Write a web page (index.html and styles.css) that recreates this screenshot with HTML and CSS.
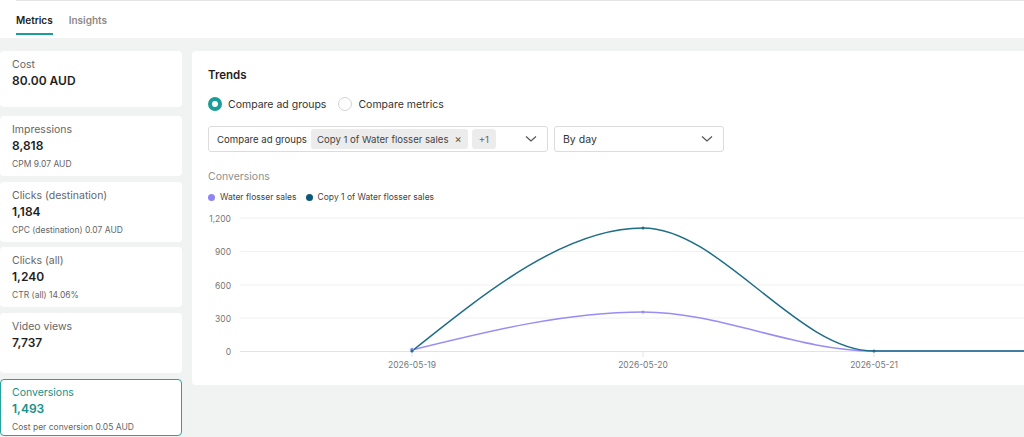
FILE: index.html
```html
<!DOCTYPE html>
<html>
<head>
<meta charset="utf-8">
<link rel="stylesheet" href="styles.css">
</head>
<body>
<header class="header">
  <div class="topline"></div>
  <nav class="tabs">
    <div class="tab active">Metrics</div>
    <div class="tab">Insights</div>
  </nav>
</header>
<main class="main">
  <aside class="cards">
    <div class="card"><div class="label">Cost</div><div class="value">80.00 AUD</div></div>
    <div class="card"><div class="label">Impressions</div><div class="value">8,818</div><div class="sub">CPM 9.07 AUD</div></div>
    <div class="card"><div class="label">Clicks (destination)</div><div class="value">1,184</div><div class="sub">CPC (destination) 0.07 AUD</div></div>
    <div class="card"><div class="label">Clicks (all)</div><div class="value">1,240</div><div class="sub">CTR (all) 14.06%</div></div>
    <div class="card"><div class="label">Video views</div><div class="value">7,737</div></div>
    <div class="card selected"><div class="label">Conversions</div><div class="value">1,493</div><div class="sub">Cost per conversion 0.05 AUD</div></div>
  </aside>
  <section class="panel">
    <h2 class="title">Trends</h2>
    <div class="radios">
      <label class="radio"><span class="dot on"></span>Compare ad groups</label>
      <label class="radio"><span class="dot"></span>Compare metrics</label>
    </div>
    <div class="selects">
      <div class="select wide">
        <span class="sel-label">Compare ad groups</span>
        <span class="chip">Copy 1 of Water flosser sales <span class="x">×</span></span>
        <span class="chip small">+1</span>
        <svg class="chev" width="12" height="8" viewBox="0 0 12 8"><path d="M1 1.5 L6 6 L11 1.5" fill="none" stroke="#555" stroke-width="1.2"/></svg>
      </div>
      <div class="select narrow">
        <span class="sel-text">By day</span>
        <svg class="chev" width="12" height="8" viewBox="0 0 12 8"><path d="M1 1.5 L6 6 L11 1.5" fill="none" stroke="#555" stroke-width="1.2"/></svg>
      </div>
    </div>
    <div class="metric-name">Conversions</div>
    <div class="legend">
      <span class="lg"><span class="ldot purple"></span>Water flosser sales</span>
      <span class="lg"><span class="ldot navy"></span>Copy 1 of Water flosser sales</span>
    </div>
    <svg class="chart" width="816" height="170" viewBox="0 0 816 170">
      <g stroke="#f0f0f0" stroke-width="1">
        <line x1="32" y1="10" x2="816" y2="10"/>
        <line x1="32" y1="43.5" x2="816" y2="43.5"/>
        <line x1="32" y1="77" x2="816" y2="77"/>
        <line x1="32" y1="110" x2="816" y2="110"/>
      </g>
      <line x1="32" y1="143.5" x2="816" y2="143.5" stroke="#e3e3e3" stroke-width="1"/>
      <g stroke="#e3e3e3"><line x1="435" y1="144" x2="435" y2="149"/><line x1="666" y1="144" x2="666" y2="149"/><line x1="204" y1="144" x2="204" y2="149"/></g>
      <g class="ylab" text-anchor="end">
        <text x="23" y="13.5">1,200</text>
        <text x="23" y="47">900</text>
        <text x="23" y="80.5">600</text>
        <text x="23" y="113.5">300</text>
        <text x="23" y="146.5">0</text>
      </g>
      <g class="xlab" text-anchor="middle">
        <text x="204" y="159.5">2026-05-19</text>
        <text x="435" y="159.5">2026-05-20</text>
        <text x="666" y="159.5">2026-05-21</text>
      </g>
      <path d="M204,142 C281,123 358,104 435,104 C512,104 589,143 666,143 L897,143" fill="none" stroke="#988cf6" stroke-width="1.5"/>
      <path d="M204,143 C281,81.5 358,20 435,20 C512,20 589,143 666,143 L897,143" fill="none" stroke="#1f6d89" stroke-width="1.5"/>
      <g fill="#988cf6"><circle cx="204" cy="141.5" r="1.8"/><circle cx="435" cy="104" r="1.5"/></g>
      <g fill="#1f6d89"><circle cx="204" cy="143" r="1.6"/><circle cx="435" cy="20" r="1.6"/><circle cx="666" cy="143" r="1.6"/></g>
    </svg>
  </section>
</main>
</body>
</html>
```

FILE: styles.css
```css
* { box-sizing: border-box; }
html, body { margin: 0; padding: 0; }
body {
  background: #f1f2f2;
  font-family: Inter, "Noto Sans", Arial, sans-serif;
  color: #222;
  width: 1024px;
  height: 437px;
  overflow: hidden;
}
.header {
  background: #fff;
  height: 38px;
}
.topline {
  margin-left: 16px;
  height: 1px;
  background: #e4e4e4;
}
.tabs {
  display: flex;
  gap: 16px;
  padding-left: 16px;
  padding-top: 12px;
}
.tab {
  font-size: 10px;
  font-weight: 600;
  color: #8a8a8a;
  height: 22px;
  line-height: 14px;
}
.tab.active {
  color: #222;
  border-bottom: 2px solid #1a9e97;
  height: 22px;
}
.main {
  display: flex;
  gap: 10px;
  padding-top: 13px;
}
.cards {
  width: 182px;
  display: flex;
  flex-direction: column;
  gap: 5.6px;
  flex-shrink: 0;
}
.card {
  background: #fff;
  border-radius: 4px;
  height: 60px;
  padding: 6px 11px 0;
  border: 1px solid transparent;
}
.card:first-child { height: 56px; margin-bottom: 3.6px; }
.card .label {
  font-size: 10.5px;
  color: #666;
  line-height: 14px;
}
.card .value {
  font-size: 12px;
  font-weight: 600;
  color: #1e1e1e;
  line-height: 17px;
}
.card .sub {
  font-size: 8.5px;
  color: #666;
  margin-top: 4px;
  line-height: 12px;
}
.card.selected {
  border-color: #27a39b;
  height: 57px;
}
.card.selected .label,
.card.selected .value {
  color: #16918a;
}
.panel {
  flex: 1;
  background: #fff;
  border-radius: 4px 0 0 4px;
  height: 334px;
  padding: 16px 0 0 16px;
  overflow: hidden;
}
.title {
  margin: 0;
  font-size: 11.5px;
  font-weight: 600;
  line-height: 16px;
  color: #1e1e1e;
}
.radios {
  display: flex;
  gap: 12px;
  margin-top: 13px;
  height: 16px;
  align-items: center;
}
.radio {
  display: flex;
  align-items: center;
  gap: 6px;
  font-size: 10.5px;
  color: #333;
}
.dot {
  width: 14px;
  height: 14px;
  border-radius: 50%;
  border: 1px solid #d4d4d4;
  background: #fff;
}
.dot.on {
  border: 4px solid #1a9e97;
}
.selects {
  display: flex;
  gap: 6px;
  margin-top: 14px;
}
.select {
  height: 26px;
  border: 1px solid #dcdcdc;
  border-radius: 3px;
  display: flex;
  align-items: center;
  padding: 0 8px 0 8px;
  font-size: 9.6px;
  color: #333;
}
.select.wide { width: 340px; }
.select.narrow { width: 170px; }
.sel-label { margin-right: 4px; }
.chip {
  background: #ececec;
  border-radius: 3px;
  height: 20px;
  display: flex;
  align-items: center;
  padding: 0 6px;
  margin-right: 4px;
  color: #444;
}
.chip .x { margin-left: 6px; font-size: 11px; color: #555; }
.chip.small { padding: 0 7px; color: #666; }
.chev { margin-left: auto; margin-right: 2px; }
.sel-text { color: #333; font-size: 10.5px; }
.metric-name {
  margin-top: 18px;
  font-size: 10.5px;
  color: #909090;
  line-height: 14px;
}
.legend {
  display: flex;
  gap: 9px;
  margin-top: 7px;
  font-size: 8.5px;
  color: #444;
  line-height: 12px;
}
.lg { display: flex; align-items: center; gap: 5px; }
.ldot { width: 7px; height: 7px; border-radius: 50%; }
.ldot.purple { background: #8f84f5; }
.ldot.navy { background: #0d5877; }
.chart {
  display: block;
  margin-top: 5px;
  overflow: visible;
}
.ylab text, .xlab text {
  font-family: Inter, "Noto Sans", Arial, sans-serif;
  font-size: 8.5px;
  fill: #777;
}
```
